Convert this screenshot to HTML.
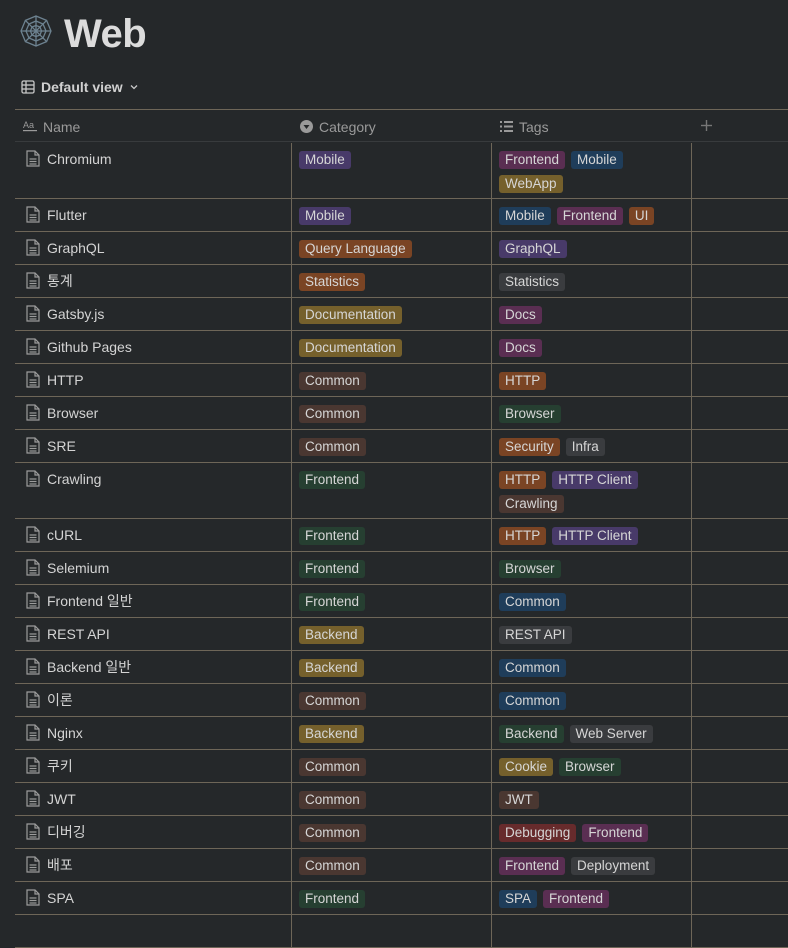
<!DOCTYPE html>
<html><head><meta charset="utf-8">
<style>
*{margin:0;padding:0;box-sizing:border-box}
body{width:788px;height:919px;overflow:hidden;background:#25282a;font-family:"Liberation Sans","Noto Sans CJK KR",sans-serif;color:#d4d4d4;position:relative}
.title{position:absolute;left:64px;top:12px;font-size:40px;font-weight:bold;color:#dcdcdc;letter-spacing:-0.5px}
.view{position:absolute;left:21px;top:79px;font-size:14px;font-weight:bold;color:#d0d0d0;display:flex;align-items:center;gap:6px}
.hline{position:absolute;left:15px;right:0;height:1px;background:#6e6658}
.head{position:absolute;top:110px;left:15px;right:0;height:32px;border-bottom:1px solid #383b3d;font-size:14px;color:#9a9a9a}
.head span{position:absolute;top:9px}
.row{position:absolute;left:15px;right:0;border-bottom:1px solid #6e6658}
.c{position:absolute;top:0;bottom:0}
.c1{left:0;width:276px}
.c2{left:276px;width:200px;border-left:1px solid #6e6658}
.c3{left:476px;width:200px;border-left:1px solid #6e6658}
.c4{left:676px;right:0;border-left:1px solid #6e6658}
.nm{position:absolute;left:32px;top:8px;font-size:14px;line-height:16px;height:16px;color:#d4d4d4;white-space:nowrap}
.doc{position:absolute;left:11px;top:7px}
.tags{position:absolute;left:7px;top:8px;width:190px;display:flex;flex-wrap:wrap;gap:6px 6px}
.t{display:inline-block;height:18px;line-height:18px;padding:0 6px;border-radius:3px;font-size:13.5px;color:#d6d6d6;white-space:nowrap}
.pu{background:#483a69}.pk{background:#5a2e52}.bl{background:#1f3d5a}.go{background:#75602c}.or{background:#7a4424}.br{background:#4a3731}.gr{background:#263f31}.gy{background:#3a3c3f}.rd{background:#672b2c}
</style></head><body>
<svg style="position:absolute;left:19px;top:14px" width="34" height="34" viewBox="0 0 34 34" fill="none" stroke="#6d8290" stroke-width="1.3">
<polygon points="17,2 27.6,6.4 32,17 27.6,27.6 17,32 6.4,27.6 2,17 6.4,6.4"/>
<polygon points="17,7 24,10 27,17 24,24 17,27 10,24 7,17 10,10"/>
<polygon points="17,11.5 21,13 22.5,17 21,21 17,22.5 13,21 11.5,17 13,13"/>
<line x1="17" y1="2" x2="17" y2="32"/><line x1="2" y1="17" x2="32" y2="17"/>
<line x1="6.4" y1="6.4" x2="27.6" y2="27.6"/><line x1="27.6" y1="6.4" x2="6.4" y2="27.6"/>
</svg>
<div class="title">Web</div>
<div class="view"><svg width="14" height="14" viewBox="0 0 14 14" fill="none" stroke="#c8c8c8" stroke-width="1.3"><rect x="1" y="1" width="12" height="12" rx="1.5"/><line x1="1" y1="5" x2="13" y2="5"/><line x1="1" y1="9" x2="13" y2="9"/><line x1="5" y1="1" x2="5" y2="13"/></svg>Default view<svg width="10" height="10" viewBox="0 0 10 10" fill="none" stroke="#c8c8c8" stroke-width="1.3"><polyline points="2,3.5 5,6.5 8,3.5"/></svg></div>
<div class="hline" style="top:109px"></div>
<div class="head">
<svg style="position:absolute;left:8px;top:10px" width="14" height="12" viewBox="0 0 14 12" fill="#9a9a9a"><text x="0" y="8" font-size="9" font-family="Liberation Sans" fill="#9a9a9a">Aa</text><rect x="0" y="10" width="14" height="1.2"/></svg>
<span style="left:28px">Name</span>
<svg style="position:absolute;left:285px;top:10px" width="13" height="13" viewBox="0 0 13 13"><circle cx="6.5" cy="6.5" r="6.5" fill="#9a9a9a"/><polygon points="3.5,5 9.5,5 6.5,9" fill="#25282a"/></svg>
<span style="left:304px">Category</span>
<svg style="position:absolute;left:485px;top:11px" width="13" height="11" viewBox="0 0 13 11" fill="#9a9a9a"><rect x="0" y="0" width="2" height="2"/><rect x="4" y="0" width="9" height="2"/><rect x="0" y="4.5" width="2" height="2"/><rect x="4" y="4.5" width="9" height="2"/><rect x="0" y="9" width="2" height="2"/><rect x="4" y="9" width="9" height="2"/></svg>
<span style="left:504px">Tags</span>
<svg style="position:absolute;left:686px;top:10px" width="11" height="11" viewBox="0 0 11 11" stroke="#777" stroke-width="1.4"><line x1="5.5" y1="0" x2="5.5" y2="11"/><line x1="0" y1="5.5" x2="11" y2="5.5"/></svg>
</div>
<div id="rows"></div>
<script>
const D=[
["Chromium",56,["Mobile","pu"],[["Frontend","pk"],["Mobile","bl"],["WebApp","go"]]],
["Flutter",33,["Mobile","pu"],[["Mobile","bl"],["Frontend","pk"],["UI","or"]]],
["GraphQL",33,["Query Language","or"],[["GraphQL","pu"]]],
["통계",33,["Statistics","or"],[["Statistics","gy"]]],
["Gatsby.js",33,["Documentation","go"],[["Docs","pk"]]],
["Github Pages",33,["Documentation","go"],[["Docs","pk"]]],
["HTTP",33,["Common","br"],[["HTTP","or"]]],
["Browser",33,["Common","br"],[["Browser","gr"]]],
["SRE",33,["Common","br"],[["Security","or"],["Infra","gy"]]],
["Crawling",56,["Frontend","gr"],[["HTTP","or"],["HTTP Client","pu"],["Crawling","br"]]],
["cURL",33,["Frontend","gr"],[["HTTP","or"],["HTTP Client","pu"]]],
["Selemium",33,["Frontend","gr"],[["Browser","gr"]]],
["Frontend 일반",33,["Frontend","gr"],[["Common","bl"]]],
["REST API",33,["Backend","go"],[["REST API","gy"]]],
["Backend 일반",33,["Backend","go"],[["Common","bl"]]],
["이론",33,["Common","br"],[["Common","bl"]]],
["Nginx",33,["Backend","go"],[["Backend","gr"],["Web Server","gy"]]],
["쿠키",33,["Common","br"],[["Cookie","go"],["Browser","gr"]]],
["JWT",33,["Common","br"],[["JWT","br"]]],
["디버깅",33,["Common","br"],[["Debugging","rd"],["Frontend","pk"]]],
["배포",33,["Common","br"],[["Frontend","pk"],["Deployment","gy"]]],
["SPA",33,["Frontend","gr"],[["SPA","bl"],["Frontend","pk"]]],
["",33,null,[]]
];
const doc='<svg class="doc" width="14" height="17" viewBox="0 0 14 17" fill="none" stroke="#9c9c9c" stroke-width="1.2"><path d="M1 1h8l4 4v11H1z"/><path d="M9 1v4h4"/><line x1="3.5" y1="9" x2="10.5" y2="9"/><line x1="3.5" y1="11.5" x2="10.5" y2="11.5"/><line x1="3.5" y1="14" x2="10.5" y2="14"/></svg>';
let y=143,h='';
for(const r of D){
 const tg=a=>'<div class="tags">'+a.map(t=>`<span class="t ${t[1]}">${t[0]}</span>`).join('')+'</div>';
 h+=`<div class="row" style="top:${y}px;height:${r[1]}px"><div class="c c1">${r[0]?doc+'<div class="nm">'+r[0]+'</div>':''}</div><div class="c c2">${r[2]?tg([r[2]]):''}</div><div class="c c3">${tg(r[3])}</div><div class="c c4"></div></div>`;
 y+=r[1];
}
document.getElementById('rows').innerHTML=h;
</script>
</body></html>
